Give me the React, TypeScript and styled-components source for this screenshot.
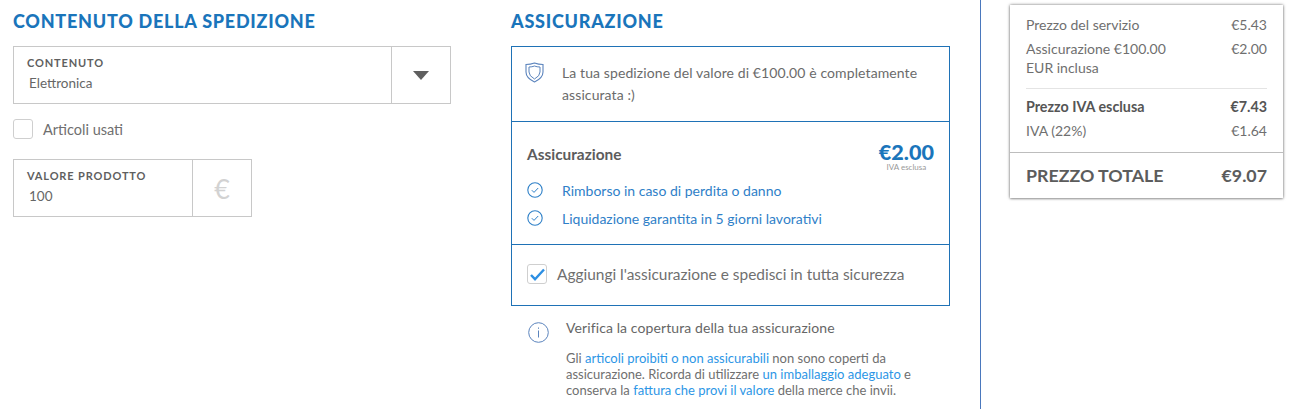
import React from "react";
import styled, { createGlobalStyle } from "styled-components";

const GlobalStyle = createGlobalStyle`
  html, body {
    margin: 0;
    padding: 0;
    background: #fff;
  }
  body {
    font-family: "Lato", "Liberation Sans", sans-serif;
    color: #666;
  }
`;

const Page = styled.div`
  display: flex;
  height: 409px;
  overflow: hidden;
`;

const LeftColumn = styled.section`
  width: 438px;
  margin-left: 13px;
  flex: none;
`;

const MiddleColumn = styled.section`
  width: 439px;
  margin-left: 60px;
  flex: none;
`;

const SideColumn = styled.aside`
  margin-left: 30px;
  padding: 5px 0 0 29px;
  border-left: 1px solid #4a78bd;
  flex: none;
`;

const Title = styled.h2`
  margin: 0 0 10px;
  height: 30px;
  line-height: 30px;
  padding-top: 6px;
  box-sizing: content-box;
  font-size: 18px;
  font-weight: 900;
  letter-spacing: 0.75px;
  color: #1a75bb;
`;

const Field = styled.div<{ $width: number }>`
  display: flex;
  width: ${(p) => p.$width}px;
  height: 58px;
  box-sizing: border-box;
  border: 1px solid #c8c8c8;
`;

const FieldBody = styled.div`
  flex: 1;
  padding: 9px 13px 0;
`;

const FieldLabel = styled.div`
  font-size: 11px;
  line-height: 14px;
  font-weight: 700;
  letter-spacing: 0.85px;
  color: #5f5f5f;
`;

const FieldValue = styled.div`
  margin: 5px 0 0 2px;
  font-size: 13.5px;
  line-height: 16px;
  color: #666;
`;

const FieldAddon = styled.div`
  width: 58px;
  flex: none;
  border-left: 1px solid #c8c8c8;
  display: flex;
  align-items: center;
  justify-content: center;
`;

const Caret = styled.span`
  width: 0;
  height: 0;
  border-left: 8.5px solid transparent;
  border-right: 8.5px solid transparent;
  border-top: 9px solid #5f5f5f;
`;

const EuroSign = styled.span`
  font-size: 27px;
  font-weight: 400;
  color: #d2d2d2;
`;

const CheckRow = styled.label<{ $size: number }>`
  display: flex;
  align-items: center;
  gap: 10px;
  font-size: ${(p) => p.$size}px;
  color: #6f6f6f;
`;

const UsedRow = styled.div`
  margin: 15px 0 20px;
`;

const CheckBox = styled.span`
  width: 20px;
  height: 20px;
  box-sizing: border-box;
  border: 1px solid #cfcfcf;
  border-radius: 3px;
  display: flex;
  align-items: center;
  justify-content: center;
  flex: none;
`;

const InsuranceBox = styled.div`
  border: 1px solid #1f72b6;
`;

const InsuranceSection = styled.div<{ $height: number }>`
  height: ${(p) => p.$height}px;
  box-sizing: border-box;
  & + & {
    border-top: 1px solid #1f72b6;
  }
`;

const CoveredRow = styled.div`
  display: flex;
  padding: 15px 15px 0 13px;
`;

const ShieldWrap = styled.div`
  width: 37px;
  flex: none;
`;

const CoveredText = styled.p`
  margin: 0;
  font-size: 14px;
  letter-spacing: 0.1px;
  line-height: 22px;
  color: #6b6b6b;
`;

const PlanSection = styled.div`
  padding: 19px 15px 0;
`;

const PlanHead = styled.div`
  display: flex;
  justify-content: space-between;
`;

const PlanName = styled.div`
  margin-top: 4px;
  font-size: 15.4px;
  line-height: 18px;
  font-weight: 700;
  color: #5c5c5c;
`;

const PlanPrice = styled.div`
  text-align: center;
  font-size: 21.6px;
  line-height: 22px;
  font-weight: 900;
  color: #1a75bb;
`;

const PlanNote = styled.div`
  font-size: 8px;
  line-height: 9px;
  font-weight: 400;
  color: #999;
`;

const PerkList = styled.ul`
  list-style: none;
  margin: 4px 0 0;
  padding: 0;
`;

const Perk = styled.li`
  display: flex;
  align-items: center;
  height: 28px;
  font-size: 14px;
  color: #2f80c8;
`;

const PerkIcon = styled.span`
  width: 35px;
  flex: none;
  display: flex;
`;

const AddSection = styled.div`
  padding: 19px 15px 0;
`;

const Notice = styled.div`
  display: flex;
  padding: 13px 0 0 17px;
`;

const NoticeIcon = styled.div`
  width: 38px;
  flex: none;
  padding-top: 3px;
`;

const NoticeTitle = styled.div`
  font-size: 14px;
  letter-spacing: 0.1px;
  line-height: 18px;
  color: #666;
`;

const NoticeText = styled.p`
  margin: 13px 0 0;
  font-size: 13px;
  line-height: 16px;
  color: #6f6f6f;
`;

const NoticeLink = styled.a`
  color: #2d96e6;
`;

const Summary = styled.div`
  width: 273px;
  height: 193px;
  box-sizing: border-box;
  background: #fff;
  box-shadow: 0 0 3px rgba(0, 0, 0, 0.55), 0 1px 2px rgba(0, 0, 0, 0.2);
`;

const SummaryTop = styled.div`
  padding: 8px 16px 0;
  height: 148px;
  box-sizing: border-box;
  border-bottom: 1px solid #bdbdbd;
`;

const Line = styled.div<{ $bold?: boolean }>`
  display: flex;
  justify-content: space-between;
  font-size: ${(p) => (p.$bold ? 14.3 : 14)}px;
  line-height: 24px;
  color: ${(p) => (p.$bold ? "#555" : "#6f6f6f")};
  font-weight: ${(p) => (p.$bold ? 700 : 400)};
`;

const LineLabel = styled.span`
  line-height: 19px;
  padding-top: 2px;
`;

const Rule = styled.hr`
  border: 0;
  border-top: 1px solid #e4e4e4;
  margin: 11px 0 6px;
`;

const Total = styled.div`
  display: flex;
  justify-content: space-between;
  align-items: center;
  height: 45px;
  box-sizing: border-box;
  padding: 0 16px 2px;
  font-size: 17.8px;
  font-weight: 700;
  color: #5c5c5c;
`;

const TickCircle = () => (
  <svg width="16" height="16" viewBox="0 0 16 16" fill="none" stroke="#2f80c8">
    <circle cx="8" cy="8" r="7.2" strokeWidth="1.1" />
    <path d="M4.8 8.2l2.2 2.2 4.2-4.4" strokeWidth="1" />
  </svg>
);

export default function App() {
  return (
    <>
      <GlobalStyle />
      <Page>
        <LeftColumn>
          <Title>CONTENUTO DELLA SPEDIZIONE</Title>
          <Field $width={438}>
            <FieldBody>
              <FieldLabel>CONTENUTO</FieldLabel>
              <FieldValue>Elettronica</FieldValue>
            </FieldBody>
            <FieldAddon>
              <Caret />
            </FieldAddon>
          </Field>
          <UsedRow>
            <CheckRow $size={14.5}>
              <CheckBox />
              Articoli usati
            </CheckRow>
          </UsedRow>
          <Field $width={239}>
            <FieldBody>
              <FieldLabel>VALORE PRODOTTO</FieldLabel>
              <FieldValue>100</FieldValue>
            </FieldBody>
            <FieldAddon>
              <EuroSign>€</EuroSign>
            </FieldAddon>
          </Field>
        </LeftColumn>

        <MiddleColumn>
          <Title>ASSICURAZIONE</Title>
          <InsuranceBox>
            <InsuranceSection $height={74}>
              <CoveredRow>
                <ShieldWrap>
                  <svg width="19" height="21" viewBox="0 0 19 21" fill="none" stroke="#5b84bd">
                    <path d="M1 2.5Q5.5 2.5 9.5 1Q13.5 2.5 18 2.5V10Q18 16 9.5 20Q1 16 1 10Z" strokeWidth="1.1" />
                    <path d="M4 5Q7 5 9.5 4Q12 5 15 5V10Q15 14 9.5 17Q4 14 4 10Z" strokeWidth="1" />
                  </svg>
                </ShieldWrap>
                <CoveredText>
                  La tua spedizione del valore di €100.00 è completamente
                  <br />
                  assicurata :)
                </CoveredText>
              </CoveredRow>
            </InsuranceSection>
            <InsuranceSection $height={123}>
              <PlanSection>
                <PlanHead>
                  <PlanName>Assicurazione</PlanName>
                  <PlanPrice>
                    €2.00
                    <PlanNote>IVA esclusa</PlanNote>
                  </PlanPrice>
                </PlanHead>
                <PerkList>
                  <Perk>
                    <PerkIcon>
                      <TickCircle />
                    </PerkIcon>
                    Rimborso in caso di perdita o danno
                  </Perk>
                  <Perk>
                    <PerkIcon>
                      <TickCircle />
                    </PerkIcon>
                    Liquidazione garantita in 5 giorni lavorativi
                  </Perk>
                </PerkList>
              </PlanSection>
            </InsuranceSection>
            <InsuranceSection $height={61}>
              <AddSection>
                <CheckRow $size={15.45}>
                  <CheckBox>
                    <svg width="15" height="13" viewBox="0 0 15 13" fill="none" stroke="#2d8fe3">
                      <path d="M1 7l4 4.2L14 1.5" strokeWidth="2.4" />
                    </svg>
                  </CheckBox>
                  Aggiungi l'assicurazione e spedisci in tutta sicurezza
                </CheckRow>
              </AddSection>
            </InsuranceSection>
          </InsuranceBox>
          <Notice>
            <NoticeIcon>
              <svg width="21" height="21" viewBox="0 0 21 21" fill="none" stroke="#5b84bd">
                <circle cx="10.5" cy="10.5" r="9.8" strokeWidth="1" />
                <path d="M10.5 8.5v7M10.5 5.5v1.3" strokeWidth="1" />
              </svg>
            </NoticeIcon>
            <div>
              <NoticeTitle>Verifica la copertura della tua assicurazione</NoticeTitle>
              <NoticeText>
                Gli <NoticeLink>articoli proibiti o non assicurabili</NoticeLink> non sono coperti da
                <br />
                assicurazione. Ricorda di utilizzare <NoticeLink>un imballaggio adeguato</NoticeLink> e
                <br />
                conserva la <NoticeLink>fattura che provi il valore</NoticeLink> della merce che invii.
              </NoticeText>
            </div>
          </Notice>
        </MiddleColumn>

        <SideColumn>
          <Summary>
            <SummaryTop>
              <Line>
                <span>Prezzo del servizio</span>
                <span>€5.43</span>
              </Line>
              <Line>
                <LineLabel>
                  Assicurazione €100.00
                  <br />
                  EUR inclusa
                </LineLabel>
                <span>€2.00</span>
              </Line>
              <Rule />
              <Line $bold>
                <span>Prezzo IVA esclusa</span>
                <span>€7.43</span>
              </Line>
              <Line>
                <span>IVA (22%)</span>
                <span>€1.64</span>
              </Line>
            </SummaryTop>
            <Total>
              <span>PREZZO TOTALE</span>
              <span>€9.07</span>
            </Total>
          </Summary>
        </SideColumn>
      </Page>
    </>
  );
}
